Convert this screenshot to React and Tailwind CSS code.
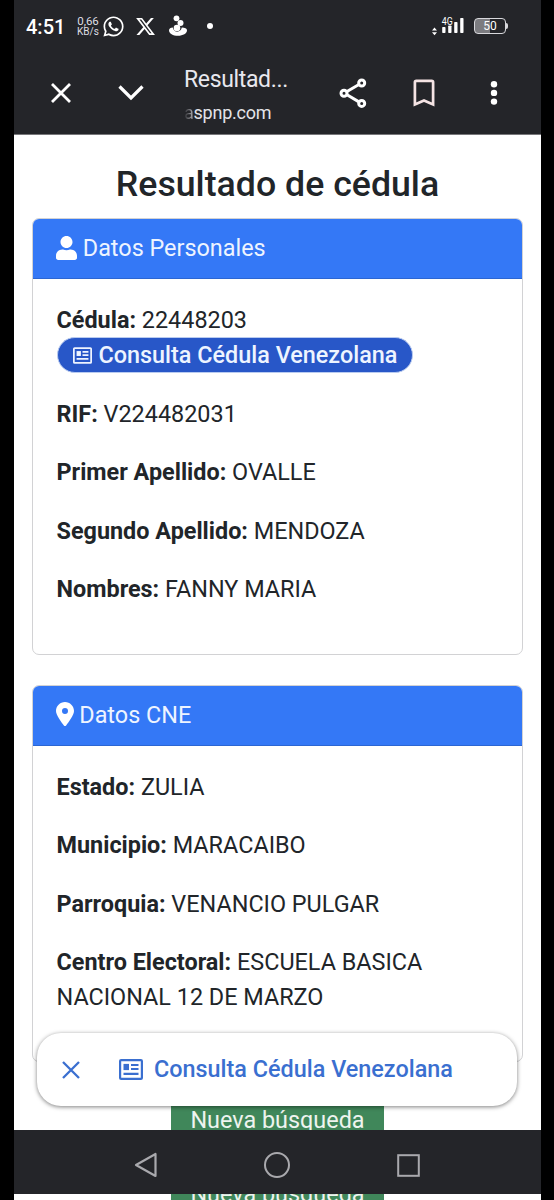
import React from 'react';
import { FaUser, FaWhatsapp } from 'react-icons/fa';
import { FaLocationDot, FaXTwitter } from 'react-icons/fa6';

const personales = [
  ['RIF:', 'V224482031'],
  ['Primer Apellido:', 'OVALLE'],
  ['Segundo Apellido:', 'MENDOZA'],
  ['Nombres:', 'FANNY MARIA'],
];

const cne = [
  ['Estado:', 'ZULIA'],
  ['Municipio:', 'MARACAIBO'],
  ['Parroquia:', 'VENANCIO PULGAR'],
  ['Centro Electoral:', 'ESCUELA BASICA NACIONAL 12 DE MARZO'],
];

function ArticleIcon({ className }) {
  return (
    <svg viewBox="0 0 24 21" className={className} fill="none" stroke="currentColor" strokeWidth="2.2">
      <rect x="1.1" y="1.1" width="21.8" height="18.8" rx="1" />
      <path d="M12 6H19.5M12 10H19.5M4.5 14.8H19.5" />
      <rect x="4.5" y="4.9" width="5.5" height="6.2" fill="currentColor" stroke="none" />
    </svg>
  );
}

function StatusBar() {
  return (
    <div className="flex h-[52px] items-center justify-between pl-3 pr-[33px] text-white">
      <div className="flex items-center">
        <span className="w-[50px] pt-px text-[20px] font-medium">4:51</span>
        <div className="w-[24px] whitespace-nowrap text-center text-[11.5px] leading-[9px] text-[#dedee2]">
          <div className="h-[10px]">0,66</div>
          <div className="text-[10px]">KB/s</div>
        </div>
        <FaWhatsapp className="ml-[2px] size-[23px]" />
        <FaXTwitter className="ml-[10px] size-[21px]" />
        <svg viewBox="0 0 20 22" className="ml-[12px] h-[22px] w-[20px]" fill="currentColor">
          <path d="M1 15.2C1 13.6 2.6 12.8 4.8 12.5C5.5 18 13 18 13.8 12.6C16.8 12.7 19 13.4 19 15.3C19 18.5 15 20.8 10 20.8S1 18.5 1 15.2Z" />
          <circle cx="8.5" cy="3.3" r="2.9" />
          <circle cx="12.5" cy="8" r="3" />
          <circle cx="9" cy="13" r="3.3" />
        </svg>
        <span className="ml-[19px] size-[6px] rounded-full bg-white" />
      </div>
      <div className="flex items-center">
        <svg viewBox="0 0 32 20" className="h-[20px] w-[32px] overflow-visible" fill="currentColor">
          <path d="M-1 14.6L1.5 11.6L4 14.6ZM-1 16.2L1.5 19.2L4 16.2Z" />
          <rect x="9.2" y="11" width="3.3" height="6" rx="0.7" />
          <rect x="15.2" y="9.5" width="3.3" height="7.5" rx="0.7" />
          <rect x="21.2" y="6" width="3.3" height="11" rx="0.7" />
          <rect x="27.2" y="2" width="3.3" height="15" rx="0.7" />
          <text x="8.7" y="8.7" fontSize="10" textLength="11" lengthAdjust="spacingAndGlyphs">4G</text>
        </svg>
        <div className="ml-[9px] flex h-[16px] w-[32px] items-center justify-center rounded-[4px] border border-[#d8d8dc] bg-linear-to-r from-[#7c7c80] from-50% to-[#242529] to-50% text-[12px]">
          50
        </div>
        <span className="h-[6px] w-[2px] rounded-r bg-[#d8d8dc]" />
      </div>
    </div>
  );
}

function Toolbar() {
  return (
    <div className="flex h-[82px] items-center text-white">
      <svg viewBox="0 0 20 20" className="ml-[37px] size-5" fill="none" stroke="currentColor" strokeWidth="2.8">
        <path d="M1 1L19 19M19 1L1 19" />
      </svg>
      <svg viewBox="0 0 26 16" className="ml-[47px] h-4 w-[26px]" fill="none" stroke="currentColor" strokeWidth="3.2">
        <path d="M1.5 1.5L13 13L24.5 1.5" />
      </svg>
      <div className="ml-[40px] w-[118px] whitespace-nowrap pt-[4px]">
        <div className="text-[23px] leading-[30px] tracking-[-0.35px] text-[#e8e8ee]">Resultad...</div>
        <div className="mt-[5px] text-[18px] leading-[26px] tracking-[-0.25px] text-[#e3e3e8]">
          <span className="bg-linear-to-r from-transparent to-[#bbbbc0] bg-clip-text text-transparent">a</span>spnp.com
        </div>
      </div>
      <svg viewBox="0 0 28 30" className="ml-[37px] h-[30px] w-[28px]" fill="none" stroke="currentColor" strokeWidth="3">
        <path d="M8 13.5L19.5 6.8M8 16.8L19.5 23.6" />
        <circle cx="5" cy="15.2" r="3" />
        <circle cx="22.7" cy="5" r="3" />
        <circle cx="22.7" cy="25.4" r="3" />
      </svg>
      <svg viewBox="0 0 22 28" className="ml-[46px] h-[28px] w-[22px] text-[#f5e4e4]" fill="none" stroke="currentColor" strokeWidth="2.7">
        <path d="M1.9 25.4V3.2Q1.9 1.8 3.3 1.8H18.7Q20.1 1.8 20.1 3.2V25.4L11 21.4Z" />
      </svg>
      <svg viewBox="0 0 8 26" className="ml-[55px] h-[26px] w-[8px]" fill="currentColor">
        <circle cx="4" cy="4.2" r="3.2" />
        <circle cx="4" cy="12.9" r="3.2" />
        <circle cx="4" cy="21.6" r="3.2" />
      </svg>
    </div>
  );
}

function Card({ icon, title, children, className }) {
  return (
    <section className={`rounded-[7px] border-[1.5px] border-[#d2d2d4] ${className}`}>
      <h2 className="flex h-[60px] items-center rounded-t-[6px] border-b border-[#2c66d2] bg-[#3478f6] px-[23.3px] text-[23.4px] text-[#eef4ff]">
        {icon}
        {title}
      </h2>
      <div className="space-y-[23.4px] px-[23.5px] pt-[23.8px] text-[23.4px] leading-[35.1px]">{children}</div>
    </section>
  );
}

function Field({ label, value }) {
  return (
    <p>
      <b className="font-bold">{label}</b> {value}
    </p>
  );
}

function BottomSheet() {
  return (
    <div className="absolute left-[23px] top-[898px] flex h-[73px] w-[480px] items-center rounded-[24px] bg-white text-[#3a6fd0] shadow-[0_1px_4px_rgba(0,0,0,0.5)]">
      <svg viewBox="0 0 18 18" className="ml-[25px] size-[18px]" fill="none" stroke="currentColor" strokeWidth="2.3">
        <path d="M1 1L17 17M17 1L1 17" />
      </svg>
      <ArticleIcon className="-mt-px ml-[39px] h-[21px] w-6" />
      <span className="ml-[11px] whitespace-nowrap text-[23.4px] font-medium">Consulta Cédula Venezolana</span>
    </div>
  );
}

function NavBar() {
  return (
    <div className="flex h-[64px] shrink-0 items-center bg-[#242529] pt-[6px] text-[#a9a9ad]">
      <svg viewBox="0 0 24 26" className="ml-[120px] h-[26px] w-6" fill="none" stroke="currentColor" strokeWidth="2.2" strokeLinejoin="round">
        <path d="M21.5 2V24L2 13Z" />
      </svg>
      <svg viewBox="0 0 26 26" className="ml-[106px] size-[26px]" fill="none" stroke="currentColor" strokeWidth="2">
        <circle cx="13" cy="13" r="12" />
      </svg>
      <svg viewBox="0 0 23 23" className="ml-[107px] size-[23px]" fill="none" stroke="currentColor" strokeWidth="2">
        <rect x="1.2" y="1.2" width="20.6" height="20.6" />
      </svg>
    </div>
  );
}

export default function App() {
  return (
    <div className="h-[1200px] w-[554px] overflow-hidden bg-black pl-[14px] pr-[13px] font-['Roboto',sans-serif] text-[#212529]">
      <div className="flex h-full flex-col bg-white">
        <header className="h-[135px] shrink-0 border-b border-[#77777a] bg-[#242529]">
          <StatusBar />
          <Toolbar />
        </header>

        <main className="relative h-[995px] shrink-0 overflow-hidden px-[18px] pt-[27px]">
          <h1 className="whitespace-nowrap text-center text-[35.7px] font-medium leading-[44px]">Resultado de cédula</h1>
          <Card
            className="mt-[12px] h-[437px]"
            icon={<FaUser className="-mt-[2px] mr-[5.5px] h-[24px] w-[21px] text-white" />}
            title="Datos Personales"
          >
            <div>
              <Field label="Cédula:" value="22448203" />
              <div className="-mt-px flex h-[36.6px] w-[356px] items-center whitespace-nowrap rounded-full border border-[#b9cbf0] bg-[#2857c8] pl-[15px] font-medium text-[#eef4ff]">
                <ArticleIcon className="mr-[7px] h-[17px] w-[19px]" />
                Consulta Cédula Venezolana
              </div>
            </div>
            {personales.map(([label, value]) => (
              <Field key={label} label={label} value={value} />
            ))}
          </Card>

          <Card
            className="mt-[30px] h-[377px]"
            icon={<FaLocationDot className="-mt-[3px] mr-[5px] h-[24px] w-[18px] text-white" />}
            title="Datos CNE"
          >
            {cne.map(([label, value]) => (
              <Field key={label} label={label} value={value} />
            ))}
          </Card>

          <div className="mx-auto mt-[30px] h-[60px] w-[213px] bg-[#40875a] pt-[11px] text-center text-[23.4px] leading-[35px] text-[#eef4ef]">
            Nueva búsqueda
          </div>
          <BottomSheet />
        </main>

        <NavBar />
        <div className="h-[6px] overflow-hidden">
          <div className="mx-auto h-[6px] w-[213px] overflow-hidden bg-[#40875a] text-center text-[23.4px] text-[#eef4ef]">
            <div className="-mt-[17px] leading-[35px]">Nueva búsqueda</div>
          </div>
        </div>
      </div>
    </div>
  );
}
